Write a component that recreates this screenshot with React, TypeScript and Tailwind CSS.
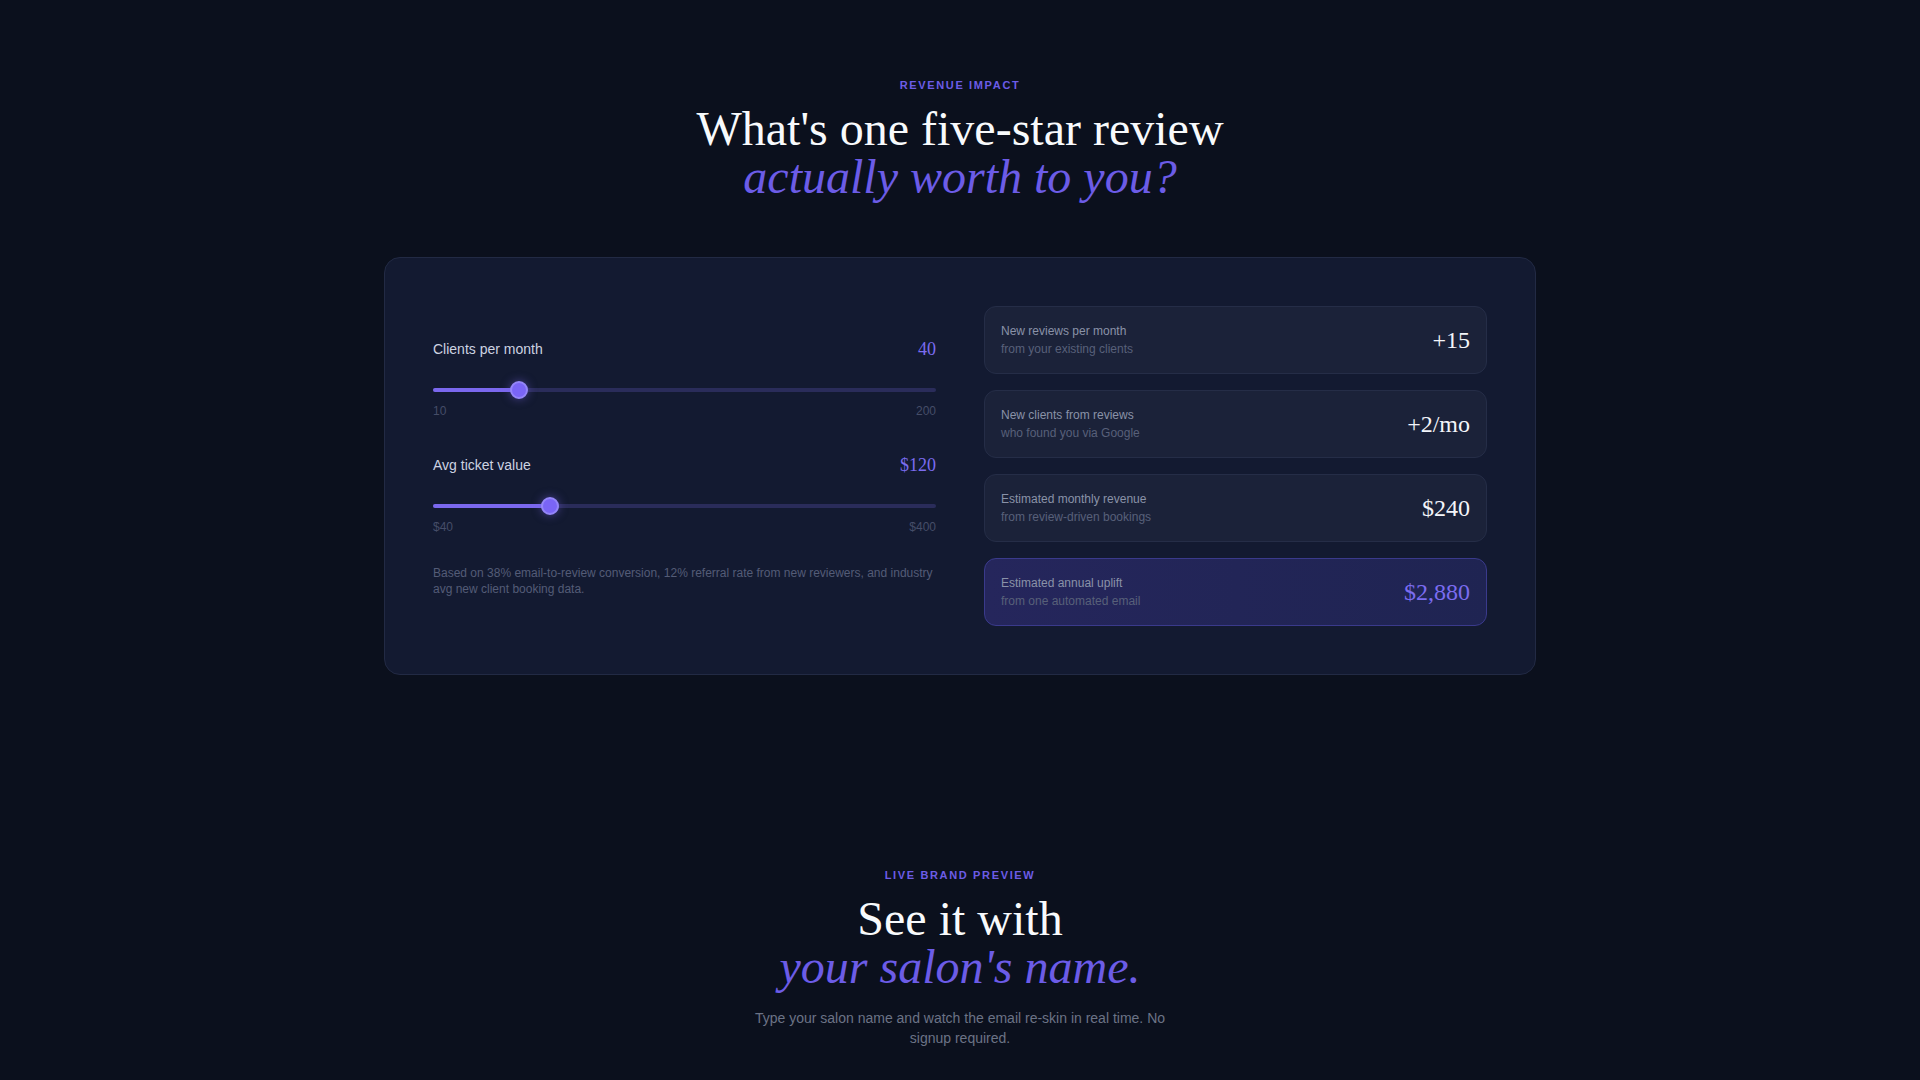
import React, { useState } from 'react';

type RangeFieldProps = {
  label: string;
  value: number;
  min: number;
  max: number;
  format: (n: number) => string;
  onChange: (n: number) => void;
};

const RangeField: React.FC<RangeFieldProps> = ({ label, value, min, max, format, onChange }) => {
  const pct = ((value - min) / (max - min)) * 100;
  // thumb is 18px wide, so its travel is the track width minus 18px
  const offset = `calc(${pct}% - ${(pct * 0.18).toFixed(2)}px)`;

  return (
    <div>
      <div className="flex h-7 items-center justify-between">
        <span className="text-sm text-[#cdd3e1]">{label}</span>
        <span className="font-['Liberation_Serif',serif] text-lg text-[#7b6cf0]">{format(value)}</span>
      </div>
      <div className="relative mt-[18px] h-[18px]">
        <div className="absolute inset-x-0 top-[7px] h-1 rounded-full bg-[#2a2c5a]" />
        <div
          className="absolute left-0 top-[7px] h-1 rounded-full bg-[#7b68ee]"
          style={{ width: `calc(${pct}% - ${(pct * 0.18).toFixed(2)}px + 9px)` }}
        />
        <div
          className="pointer-events-none absolute top-0 h-[18px] w-[18px] rounded-full border-2 border-[#9486f8] bg-[#7a65f6] shadow-[0_0_10px_rgba(123,104,238,0.5)]"
          style={{ left: offset }}
        />
        <input
          type="range"
          min={min}
          max={max}
          value={value}
          onChange={e => onChange(parseInt(e.target.value, 10))}
          className="absolute inset-0 h-full w-full cursor-pointer opacity-0"
        />
      </div>
      <div className="mt-1 flex justify-between text-xs leading-4 text-[#454d68]">
        <span>{format(min)}</span>
        <span>{format(max)}</span>
      </div>
    </div>
  );
};

type StatProps = {
  title: string;
  sub: string;
  value: string;
  highlight?: boolean;
};

const Stat: React.FC<StatProps> = ({ title, sub, value, highlight }) => (
  <div
    className={
      highlight
        ? 'flex items-center justify-between rounded-xl border border-[#3a3a8c] bg-gradient-to-r from-[#25265c] to-[#1f2452] px-4 py-4'
        : 'flex items-center justify-between rounded-xl border border-[#252d47] bg-[#1b2239] px-4 py-4'
    }
  >
    <div className="text-xs leading-4">
      <p className="text-[#8a92a8]">{title}</p>
      <p className="mt-0.5 text-[#586079]">{sub}</p>
    </div>
    <span
      className={
        highlight
          ? "font-['Liberation_Serif',serif] text-2xl text-[#7b6cf0]"
          : "font-['Liberation_Serif',serif] text-2xl text-[#f3f5fa]"
      }
    >
      {value}
    </span>
  </div>
);

const App: React.FC = () => {
  const [clients, setClients] = useState(40);
  const [ticket, setTicket] = useState(120);

  const reviews = Math.round(clients * 0.38);
  const newClients = Math.round(reviews * 0.12);
  const monthly = newClients * ticket;
  const annual = monthly * 12;

  return (
    <div className="min-h-screen bg-[#0b101d] font-['Liberation_Sans',Arial,sans-serif] text-white">
      {/* revenue calculator */}
      <section className="px-6 pt-[77px]">
        <div className="text-center">
          <p className="text-[11px] font-bold uppercase leading-4 tracking-[0.15em] text-[#6c5ce7]">Revenue impact</p>
          <h2 className="mt-3 font-['Liberation_Serif',serif] text-5xl leading-none text-[#f8fafc]">
            What's one five-star review
            <br />
            <em className="text-[#6c5ce7]">actually worth to you?</em>
          </h2>
        </div>

        <div className="mx-auto mt-14 grid max-w-6xl grid-cols-2 items-center gap-12 rounded-2xl border border-[#222a44] bg-[#131a31] p-12">
          <div>
            <RangeField
              label="Clients per month"
              value={clients}
              min={10}
              max={200}
              format={n => `${n}`}
              onChange={setClients}
            />
            <div className="mt-8">
              <RangeField
                label="Avg ticket value"
                value={ticket}
                min={40}
                max={400}
                format={n => `$${n}`}
                onChange={setTicket}
              />
            </div>
            <p className="mt-[30px] text-xs leading-snug text-[#545c77]">
              Based on 38% email-to-review conversion, 12% referral rate from new reviewers, and industry avg new
              client booking data.
            </p>
          </div>

          <div className="flex flex-col gap-4">
            <Stat title="New reviews per month" sub="from your existing clients" value={`+${reviews}`} />
            <Stat title="New clients from reviews" sub="who found you via Google" value={`+${newClients}/mo`} />
            <Stat
              title="Estimated monthly revenue"
              sub="from review-driven bookings"
              value={`$${monthly.toLocaleString('en-US')}`}
            />
            <Stat
              title="Estimated annual uplift"
              sub="from one automated email"
              value={`$${annual.toLocaleString('en-US')}`}
              highlight
            />
          </div>
        </div>
      </section>

      {/* brand preview intro */}
      <section className="px-6 pb-[32px] pt-[192px] text-center">
        <p className="text-[11px] font-bold uppercase leading-4 tracking-[0.15em] text-[#6c5ce7]">Live brand preview</p>
        <h2 className="mt-3 font-['Liberation_Serif',serif] text-5xl leading-none text-[#f8fafc]">
          See it with
          <br />
          <em className="text-[#6c5ce7]">your salon's name.</em>
        </h2>
        <p className="mx-auto mt-[17px] max-w-md text-sm text-[#6b7386]">
          Type your salon name and watch the email re-skin in real time. No signup required.
        </p>
      </section>
    </div>
  );
};

export default App;
